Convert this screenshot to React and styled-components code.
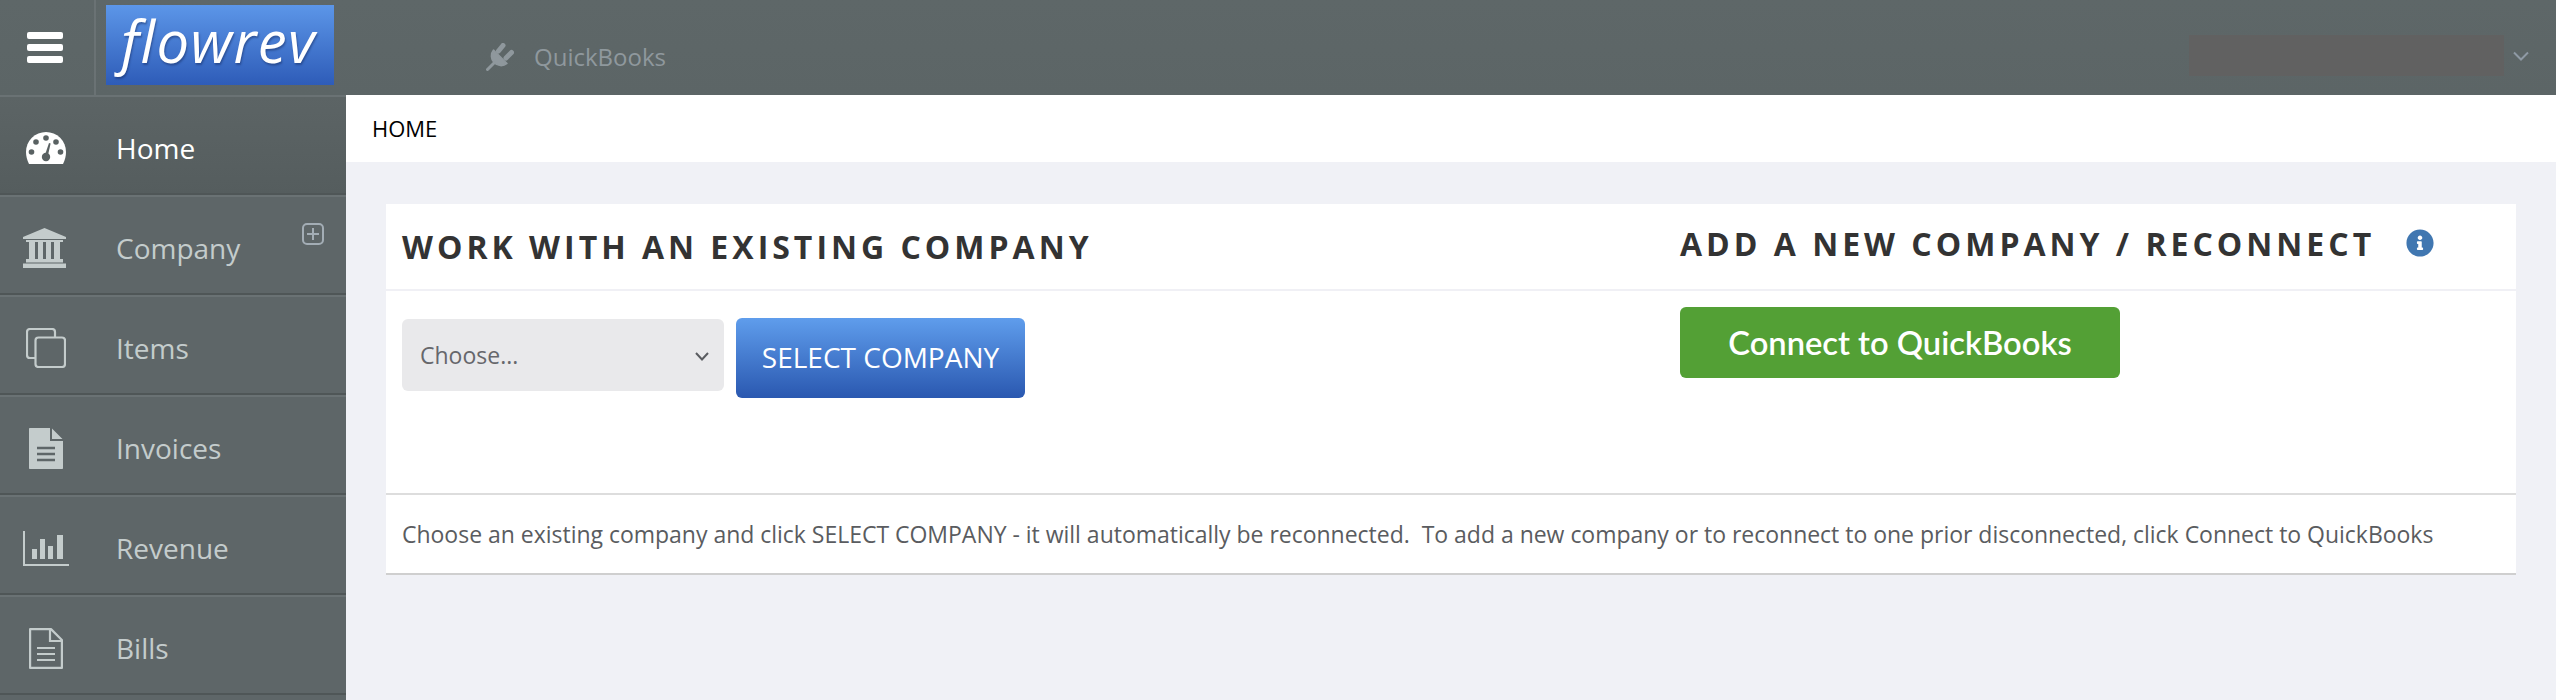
import React from "react";
import styled, { createGlobalStyle } from "styled-components";
import { FaInfoCircle } from "react-icons/fa";

const GlobalStyle = createGlobalStyle`
html, body {
  margin: 0;
  padding: 0;
  height: 100%;
  overflow: hidden;
  font-family: "Open Sans", "Liberation Sans", sans-serif;
  background: #f0f1f6;
}
* { box-sizing: border-box; }
`;

const Page = styled.div`
display: flex;
flex-direction: column;
height: 700px;
overflow: hidden;
`;

const TopBar = styled.header`
display: flex;
align-items: stretch;
flex: 0 0 95px;
background: linear-gradient(to bottom, #5e6768, #5c6566);
`;

const MenuCell = styled.div`
flex: 0 0 96px;
padding-left: 27px;
display: flex;
align-items: center;
border-right: 2px solid #6a7274;
`;

const Logo = styled.div`
flex: 0 0 228px;
height: 80px;
margin: 5px 0 0 10px;
padding-left: 15px;
background: linear-gradient(to bottom, #5c96e8, #2e5cb8);
color: #fff;
font-style: italic;
font-size: 58px;
line-height: 72px;
letter-spacing: 1.4px;
text-shadow: 1px 2px 2px rgba(20, 40, 90, 0.45);
`;

const Connection = styled.div`
display: flex;
align-items: center;
gap: 20px;
margin: 18px 0 0 152px;
color: #8f989d;
font-size: 24px;
`;

const Account = styled.div`
display: flex;
align-items: center;
gap: 9px;
margin-left: auto;
padding: 16px 27px 0 0;
`;

const Redacted = styled.div`
width: 315px;
height: 41px;
background: #616161;
`;

const Body = styled.div`
display: flex;
flex: 1;
min-height: 0;
`;

const Sidebar = styled.nav`
flex: 0 0 346px;
background: #5e6668;
`;

const NavRow = styled.div`
position: relative;
display: flex;
align-items: center;
height: 100px;
padding-top: 6px;
border-top: 2px solid #6a7274;
border-bottom: 2px solid #4f5657;
color: ${(p) => (p.$active ? "#fff" : "#c4cccc")};
background: ${(p) => (p.$active ? "linear-gradient(to bottom, #5c6465, #555d5e)" : "transparent")};
font-size: 28px;
`;

const NavIcon = styled.span`
flex: 0 0 116px;
display: flex;
justify-content: flex-start;
padding-left: ${(p) => p.$left}px;
`;

const NavLabel = styled.span`
margin-top: -1px;
`;

const Expand = styled.svg`
position: absolute;
left: 302px;
top: 26px;
`;

const Main = styled.main`
flex: 1;
min-width: 0;
`;

const Crumb = styled.div`
height: 67px;
padding: 0 0 2px 26px;
display: flex;
align-items: center;
background: #fff;
color: #000;
font-size: 22px;
`;

const Content = styled.div`
padding: 42px 40px 0;
`;

const Card = styled.section`
background: #fff;
border-bottom: 2px solid #cfcfcf;
`;

const Columns = styled.div`
display: grid;
grid-template-columns: 1278px 1fr;
padding-left: 16px;
height: ${(p) => p.$height}px;
border-bottom: 2px solid ${(p) => p.$line};
`;

const Heading = styled.h2`
display: flex;
align-items: center;
gap: 31px;
margin: ${(p) => p.$top}px 0 0;
height: 40px;
color: #333;
font-size: 32px;
font-weight: 700;
letter-spacing: 4px;
white-space: nowrap;
svg { color: #4077b1; }
`;

const Controls = styled.div`
display: flex;
align-items: flex-start;
gap: 12px;
padding-top: 27px;
`;

const SelectWrap = styled.div`
position: relative;
width: 322px;
height: 72px;
margin-top: 1px;
`;

const Select = styled.select`
appearance: none;
width: 100%;
height: 100%;
padding: 0 18px;
border: 0;
border-radius: 6px;
background: #e9e9eb;
color: #66676b;
font-family: inherit;
font-size: 23px;
`;

const Caret = styled.svg`
position: absolute;
right: 15px;
top: 33px;
pointer-events: none;
`;

const SelectButton = styled.button`
width: 289px;
height: 80px;
padding: 0 0 2px;
border: 0;
border-radius: 6px;
background: linear-gradient(to bottom, #5f9dec, #2a58b0);
color: #fff;
font-family: inherit;
font-size: 28px;
`;

const ConnectButton = styled.button`
display: block;
width: 440px;
height: 71px;
margin-top: 16px;
padding: 0 0 1px;
border: 0;
border-radius: 6px;
background: #53a035;
color: #fff;
font-family: "Lato", sans-serif;
font-size: 32.7px;
font-weight: 600;
`;

const Note = styled.p`
display: flex;
align-items: center;
height: 78px;
margin: 0;
padding-left: 16px;
color: #5a5c60;
font-size: 23px;
letter-spacing: -0.018px;
white-space: pre;
`;

const Plug = () => (
  <svg width="28" height="28" viewBox="0 0 28 28" fill="#8f989d">
    <path d="M7.5 7L21 20.5A9.6 9.6 0 0 1 7.5 7Z" stroke="#8f989d" strokeWidth="1.5" strokeLinejoin="round" />
    <path d="M12.5 8L17 2.5M20 15L25.5 9.5" stroke="#8f989d" strokeWidth="5" strokeLinecap="round" />
    <path d="M8 20L1.5 26.5" stroke="#8f989d" strokeWidth="3" strokeLinecap="round" />
  </svg>
);

const Gauge = () => (
  <svg width="40" height="32" viewBox="0 0 40 32">
    <path d="M3 32C1 28 0 24 0 20A20 20 0 0 1 40 20C40 24 39 28 37 32Z" fill="currentColor" />
    <g fill="#596162">
      <circle cx="20" cy="6" r="2.8" />
      <circle cx="10" cy="10" r="2.8" />
      <circle cx="30" cy="10" r="2.8" />
      <circle cx="5.5" cy="20" r="2.8" />
      <circle cx="34.5" cy="20" r="2.8" />
      <circle cx="20" cy="25" r="4.2" />
      <path d="M18.6 24L23 11L24.6 11.6L21.6 25Z" />
    </g>
  </svg>
);

const Bank = () => (
  <svg width="43" height="40" viewBox="0 0 43 40" fill="currentColor">
    <path d="M21.5 0L43 9V11H0V9Z" />
    <path d="M3 12H40V14H3Z" />
    <path d="M6 14H12V31H6ZM15 14H20V31H15ZM23 14H28V31H23ZM31 14H37V31H31Z" />
    <path d="M3 31H40V34.5H3Z" />
    <path d="M0 35.5H43V40H0Z" />
  </svg>
);

const Copy = () => (
  <svg width="40" height="40" viewBox="0 0 40 40" fill="none" stroke="currentColor" strokeWidth="2.2">
    <rect x="9.5" y="9.5" width="29.5" height="29.5" rx="3" />
    <path d="M9 30H4C2 30 1 29 1 27V4C1 2 2 1 4 1H26C28 1 29 2 29 4V9" />
  </svg>
);

const FilledDoc = () => (
  <svg width="34" height="41" viewBox="0 0 34 41">
    <path d="M1 0H21V13H34V40C34 40.6 33.6 41 33 41H1C0.4 41 0 40.6 0 40V1C0 0.4 0.4 0 1 0ZM23 0.5L33.5 11H23Z" fill="currentColor" />
    <path d="M8 20H26M8 26H26M8 32H26" stroke="#5e6668" strokeWidth="2.6" />
  </svg>
);

const OutlineDoc = () => (
  <svg width="34" height="41" viewBox="0 0 34 41" fill="none" stroke="currentColor" strokeWidth="2.2">
    <path d="M1.1 1.1H22L32.9 12V39.9H1.1Z" strokeLinejoin="round" />
    <path d="M21 1.5V13H33" />
    <path d="M8 20H26M8 26H26M8 32H26" />
  </svg>
);

const Bars = () => (
  <svg width="46" height="35" viewBox="0 0 46 35" fill="currentColor">
    <path d="M0 0H2V33H46V35H0Z" />
    <path d="M9 18H14V28H9ZM17 8H22V28H17ZM25 15H30V28H25ZM34 4H40V28H34Z" />
  </svg>
);

const NAV = [
  { label: "Home", icon: <Gauge />, left: 26, active: true },
  { label: "Company", icon: <Bank />, left: 23, expand: true },
  { label: "Items", icon: <Copy />, left: 26 },
  { label: "Invoices", icon: <FilledDoc />, left: 29 },
  { label: "Revenue", icon: <Bars />, left: 23 },
  { label: "Bills", icon: <OutlineDoc />, left: 29 },
];

const App = () => {
  return (
    <Page>
      <GlobalStyle />
      <TopBar>
        <MenuCell>
          <svg width="36" height="31" viewBox="0 0 36 31" fill="#fff">
            <rect width="36" height="7" rx="2" />
            <rect y="12" width="36" height="7" rx="2" />
            <rect y="24" width="36" height="7" rx="2" />
          </svg>
        </MenuCell>
        <Logo>flowrev</Logo>
        <Connection>
          <Plug />
          <span>QuickBooks</span>
        </Connection>
        <Account>
          <Redacted />
          <svg width="16" height="10" viewBox="0 0 16 10" fill="none" stroke="#8f9aa5" strokeWidth="2">
            <path d="M1 1.5L8 8.5L15 1.5" />
          </svg>
        </Account>
      </TopBar>
      <Body>
        <Sidebar>
          {NAV.map((item) => (
            <NavRow key={item.label} $active={item.active}>
              <NavIcon $left={item.left}>{item.icon}</NavIcon>
              <NavLabel>{item.label}</NavLabel>
              {item.expand && (
                <Expand width="22" height="22" viewBox="0 0 22 22" fill="none" stroke="#a3adb5" strokeWidth="2">
                  <rect x="1" y="1" width="20" height="20" rx="4" />
                  <path d="M11 5V17M5 11H17" />
                </Expand>
              )}
            </NavRow>
          ))}
        </Sidebar>
        <Main>
          <Crumb>HOME</Crumb>
          <Content>
            <Card>
              <Columns $height={87} $line="#f0f0f5">
                <Heading $top={22}>WORK WITH AN EXISTING COMPANY</Heading>
                <Heading $top={19}>
                  ADD A NEW COMPANY / RECONNECT
                  <FaInfoCircle size={28} />
                </Heading>
              </Columns>
              <Columns $height={204} $line="#dddddd">
                <Controls>
                  <SelectWrap>
                    <Select defaultValue="">
                      <option value="">Choose...</option>
                    </Select>
                    <Caret width="14" height="9" viewBox="0 0 14 9" fill="none" stroke="#5a5c60" strokeWidth="2">
                      <path d="M1 1L7 7.5L13 1" />
                    </Caret>
                  </SelectWrap>
                  <SelectButton>SELECT COMPANY</SelectButton>
                </Controls>
                <div>
                  <ConnectButton>Connect to QuickBooks</ConnectButton>
                </div>
              </Columns>
              <Note>{"Choose an existing company and click SELECT COMPANY - it will automatically be reconnected.  To add a new company or to reconnect to one prior disconnected, click Connect to QuickBooks"}</Note>
            </Card>
          </Content>
        </Main>
      </Body>
    </Page>
  );
};

export default App;
